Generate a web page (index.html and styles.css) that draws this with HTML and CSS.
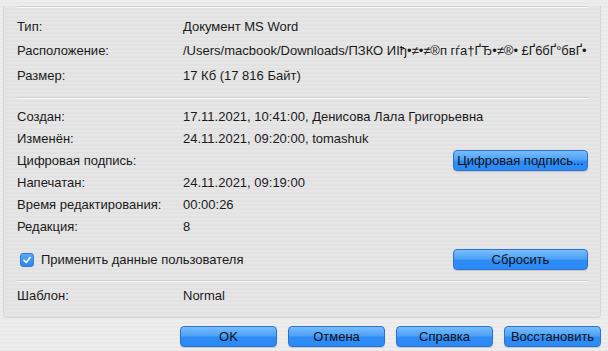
FILE: index.html
```html
<!DOCTYPE html>
<html lang="ru">
<head>
<meta charset="utf-8">
<link rel="stylesheet" href="styles.css">
</head>
<body>
<div class="panel">
  <div class="sep first"></div>
  <div class="grid g1">
    <div class="row"><span class="lbl">Тип:</span><span class="val">Документ MS Word</span></div>
    <div class="row"><span class="lbl">Расположение:</span><span class="val">/Users/macbook/Downloads/ПЗКО ИІђ•≠•≠®п гѓа†Ґ­Ђ•≠®• £Ґ6бҐ°бвҐ•</span></div>
    <div class="row"><span class="lbl">Размер:</span><span class="val">17 Кб (17 816 Байт)</span></div>
  </div>
  <div class="sep"></div>
  <div class="grid g2">
    <div class="row"><span class="lbl">Создан:</span><span class="val">17.11.2021, 10:41:00, Денисова Лала Григорьевна</span></div>
    <div class="row"><span class="lbl">Изменён:</span><span class="val">24.11.2021, 09:20:00, tomashuk</span></div>
    <div class="row"><span class="lbl">Цифровая подпись:</span><span class="val"></span><button class="btn side">Цифровая подпись...</button></div>
    <div class="row"><span class="lbl">Напечатан:</span><span class="val">24.11.2021, 09:19:00</span></div>
    <div class="row"><span class="lbl">Время редактирования:</span><span class="val">00:00:26</span></div>
    <div class="row"><span class="lbl">Редакция:</span><span class="val">8</span></div>
    <div class="row check-row">
      <label class="check"><span class="box"><svg width="10" height="10" viewBox="0 0 10 10"><path d="M2 5.2 L4.2 7.4 L8 2.6" fill="none" stroke="#fff" stroke-width="1.6" stroke-linecap="round" stroke-linejoin="round"/></svg></span>Применить данные пользователя</label>
      <button class="btn side">Сбросить</button>
    </div>
  </div>
  <div class="sep"></div>
  <div class="grid g3">
    <div class="row"><span class="lbl">Шаблон:</span><span class="val">Normal</span></div>
  </div>
</div>
<div class="actions">
  <button class="btn act">OK</button>
  <button class="btn act">Отмена</button>
  <button class="btn act">Справка</button>
  <button class="btn act">Восстановить</button>
</div>
</body>
</html>
```
FILE: styles.css
```css
* { box-sizing: border-box; }
html, body { margin: 0; padding: 0; }
body {
  width: 608px;
  height: 351px;
  overflow: hidden;
  font-family: "Liberation Sans", Arial, sans-serif;
  font-size: 13px;
  color: #1a1a1a;
  background: repeating-linear-gradient(to bottom, #ededed 0, #ededed 2px, #e9e9e9 2px, #e9e9e9 4px);
}
.panel {
  margin-left: 3px;
  width: 598px;
  height: 312px;
  border: 1px solid #d6d6d6;
  border-top: none;
  border-radius: 0 0 4px 4px;
  background: repeating-linear-gradient(to bottom, #e6e6e6 0, #e6e6e6 2px, #e2e2e2 2px, #e2e2e2 4px);
  padding: 0 12px 0 13px;
}
.sep {
  height: 2px;
  border-top: 1px solid #cfcfcf;
  border-bottom: 1px solid #f8f8f8;
}
.sep.first { margin-top: 6px; }
.row {
  display: flex;
  align-items: center;
}
.lbl { width: 166px; flex: none; }
.val { flex: 1; white-space: nowrap; }
.g1 { padding: 6px 0 9px; }
.g1 .row { height: 24.5px; }
.g2 { padding: 7px 0 8px; }
.g2 .row { height: 22px; }
.g2 .check-row { height: 24px; margin-top: 10px; }
.g3 { padding: 2px 0; }
.g3 .row { height: 24px; }
.check {
  display: flex;
  align-items: center;
  gap: 7px;
  flex: 1;
  padding-left: 3px;
}
.box {
  width: 14px;
  height: 14px;
  border-radius: 3px;
  background: linear-gradient(#5aa9f7, #2a86f3);
  border: 1px solid #2f7ad8;
  display: flex;
  align-items: center;
  justify-content: center;
}
.btn {
  font-family: "Liberation Sans", Arial, sans-serif;
  font-size: 13px;
  color: #111;
  height: 21px;
  border-radius: 4px;
  border: 1px solid #2c72d2;
  background: linear-gradient(#79bdfb 0%, #4ea2f8 45%, #2f8cf6 55%, #2a8af5 100%);
  box-shadow: 0 1px 1px rgba(0,0,0,0.15);
  padding: 0;
  margin: 0;
}
.btn.side { width: 135px; flex: none; }
.actions {
  display: flex;
  justify-content: flex-end;
  gap: 11px;
  padding: 8px 7px 0 0;
}
.btn.act { width: 97px; }
```
